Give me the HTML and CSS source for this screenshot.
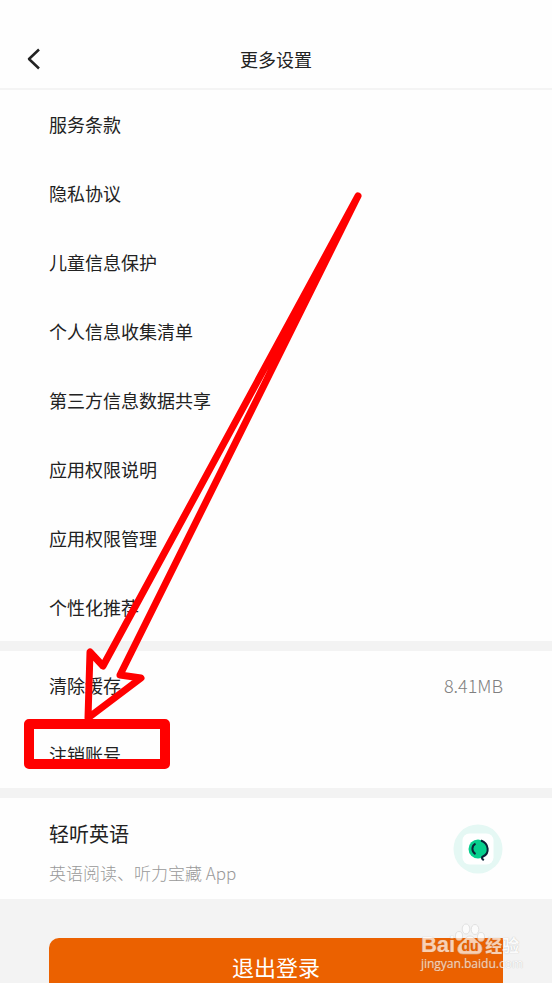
FILE: index.html
```html
<!DOCTYPE html>
<html lang="zh-CN">
<head>
<meta charset="utf-8">
<meta name="viewport" content="width=device-width, initial-scale=1">
<title>更多设置</title>
<link rel="stylesheet" href="styles.css">
</head>
<body>
<div class="screen">
  <header class="topbar">
    <button class="back" type="button" aria-label="返回">
      <svg width="20" height="24" viewBox="0 0 20 24"><path d="M15 2.500 5 12l10 9.500" fill="none" stroke="#222" stroke-width="2.5" stroke-linejoin="round"/></svg>
    </button>
    <h1 class="title">更多设置</h1>
  </header>
  <main class="groups">
    <nav class="group group-links">
      <a class="row" href="#">服务条款</a>
      <a class="row" href="#">隐私协议</a>
      <a class="row" href="#">儿童信息保护</a>
      <a class="row" href="#">个人信息收集清单</a>
      <a class="row" href="#">第三方信息数据共享</a>
      <a class="row" href="#">应用权限说明</a>
      <a class="row" href="#">应用权限管理</a>
      <a class="row" href="#">个性化推荐</a>
    </nav>
    <div class="group group-account">
      <a class="row" href="#">清除缓存<span class="value">8.41MB</span></a>
      <a class="row" href="#">注销账号</a>
    </div>
    <a class="group promo" href="#">
      <span class="promo-text">
        <strong class="promo-name">轻听英语</strong>
        <span class="promo-note">英语阅读、听力宝藏 App</span>
      </span>
      <svg class="promo-logo" viewBox="0 0 50 50" aria-hidden="true">
        <circle cx="25" cy="25" r="24.500" fill="#e5f8f4"/>
        <rect x="9.500" y="9.500" width="31" height="31" rx="7" fill="#fff"/>
        <circle cx="25" cy="25" r="9.500" fill="#08cf8d"/>
        <path d="M22.500 19.500a6 6 0 0 0 0 10.500M28 16.500c8 3 9 13 2 16-1.500.8-1.500 2 .8 3.800" fill="none" stroke="#0b2337" stroke-width="2"/>
      </svg>
    </a>
  </main>
  <footer class="actions">
    <button class="logout" type="button">退出登录</button>
  </footer>
  <svg class="overlay" width="552" height="983" viewBox="0 0 552 983" aria-hidden="true">
    <g fill="none" stroke="#f00" stroke-linejoin="round">
      <path d="M358 196 103 666 90 652 88 718 141 678 120 675Z" stroke-width="7"/>
      <rect x="29" y="724" width="136" height="40" stroke-width="10"/>
    </g>
  </svg>
  <div class="watermark">
    <div class="mark-brand">
      <span class="mark-latin">Bai</span>
      <svg class="mark-paw" width="30" height="32" viewBox="0 0 30 32" aria-hidden="true">
        <g fill="#fff" stroke="#ccc" stroke-width=".7"><ellipse cx="4" cy="13" rx="3.500" ry="4.500"/><ellipse cx="11" cy="6" rx="3.800" ry="5"/><ellipse cx="20" cy="6.500" rx="3.800" ry="5"/><ellipse cx="26" cy="14" rx="3.500" ry="4.500"/><path d="M15 13c4 0 5 4 8 6 6 4 5 12-1 12H8c-7 0-7-8-1-12 3-2 4-6 8-6Z"/></g>
        <text class="mark-du" x="15" y="28" text-anchor="middle">du</text>
      </svg>
      <span class="mark-han">经验</span>
    </div>
    <div class="mark-url">jingyan.baidu.com</div>
  </div>
</div>
</body>
</html>
```
FILE: styles.css
```css
* { box-sizing: border-box; }
body {
  margin: 0;
  background: #f3f3f3;
  color: #222;
  font-family: "Noto Sans CJK SC", sans-serif;
  font-size: 18px;
}
a { color: inherit; text-decoration: none; }
button { border: 0; padding: 0; font: inherit; }
.screen {
  position: relative;
  height: 100vh;
  overflow: hidden;
}
.topbar {
  display: grid;
  grid-template-columns: 50px 1fr 50px;
  align-items: center;
  height: 90px;
  padding-top: 30px;
  background: #fefefe;
  border-bottom: 2px solid #f4f4f4;
}
.back {
  display: flex;
  justify-content: flex-end;
  padding-right: 6px;
  background: none;
}
.title {
  margin: 0;
  font-size: 18px;
  font-weight: 400;
  text-align: center;
}
.groups {
  display: flex;
  flex-direction: column;
  gap: 10px;
}
.group { background: #fefefe; }
.group-links,
.group-account {
  display: grid;
  grid-auto-rows: 1fr;
}
.group-links { height: 551px; }
.group-account { height: 137px; }
.row {
  display: flex;
  align-items: center;
  justify-content: space-between;
  padding: 0 49px;
}
.value { color: #808080; font-weight: 300; }
.promo {
  display: flex;
  align-items: center;
  justify-content: space-between;
  height: 101px;
  padding: 0 49px;
}
.promo-text {
  display: flex;
  flex-direction: column;
  gap: 14px;
  padding-top: 8px;
}
.promo-name { font-size: 20px; line-height: 26px; font-weight: 400; }
.promo-note { font-size: 17px; line-height: 24px; font-weight: 300; color: #999; }
.promo-logo { width: 50px; height: 50px; }
.actions { padding: 39px 49px 0; }
.logout {
  width: 100%;
  height: 56px;
  border-radius: 10px 0 10px 10px;
  background: #eb6100;
  color: #fff;
  font-size: 22px;
}
.overlay { position: absolute; top: 0; left: 0; }
.watermark {
  position: absolute;
  right: 29px;
  bottom: 10px;
  color: #fff;
  opacity: 0.7;
  text-shadow: 0 0 1px #999;
}
.mark-brand { display: flex; align-items: flex-end; }
.mark-latin { font: 700 22px/20px "Liberation Sans", sans-serif; }
.mark-paw { display: block; }
.mark-du { font: 700 14px "Liberation Sans", sans-serif; fill: #eb6100; }
.mark-han { font-size: 17px; line-height: 20px; font-weight: 700; }
.mark-url { font: 400 12px/18px "Open Sans", sans-serif; }
```
